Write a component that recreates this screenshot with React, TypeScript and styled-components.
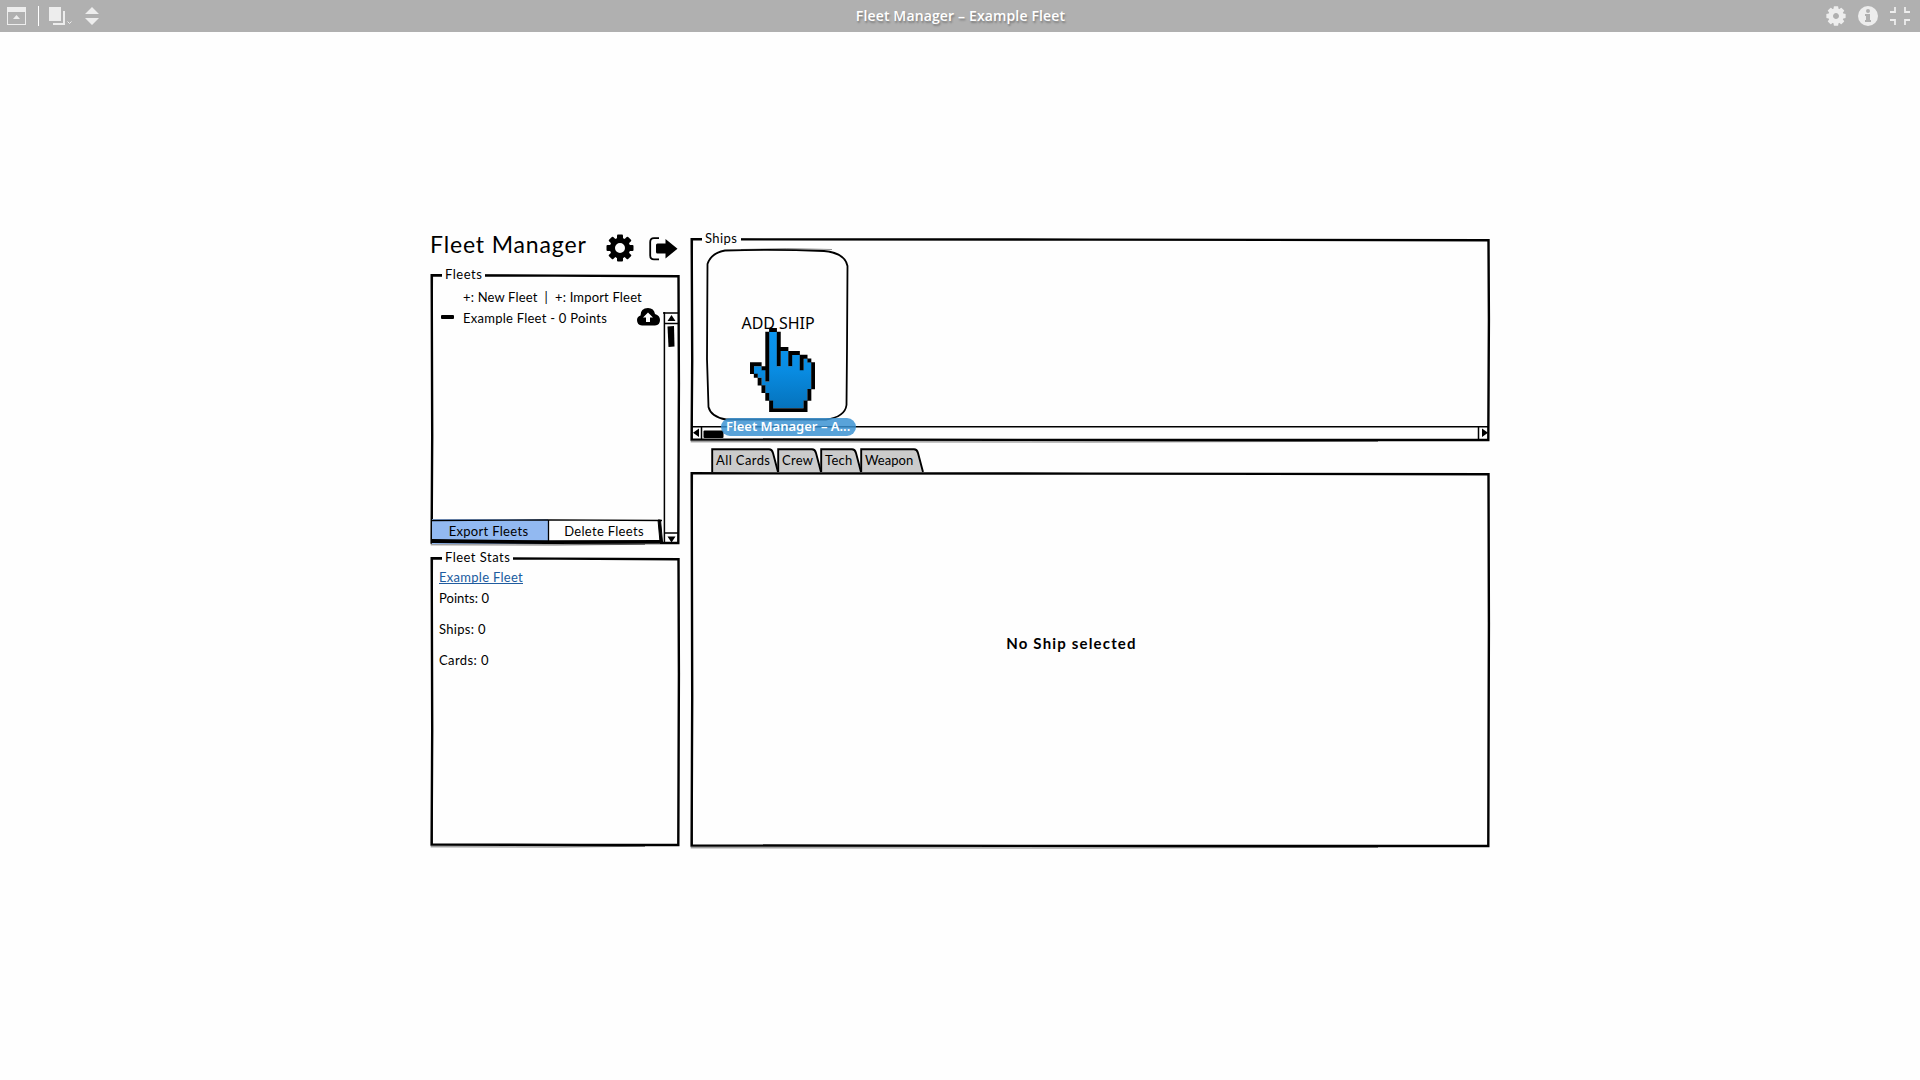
import React from "react";
import styled, { createGlobalStyle } from "styled-components";

const GlobalStyle = createGlobalStyle`
  * { box-sizing: border-box; }
  body { margin: 0; background: #fefefe; color: #000; font-family: Lato, "Open Sans", sans-serif; }
  svg { display: block; flex: none; }
`;

const Page = styled.div`
  min-height: 1080px;
  display: flex;
  flex-direction: column;
`;

const Toolbar = styled.header`
  height: 32px;
  display: grid;
  grid-template-columns: 1fr auto 1fr;
  align-items: center;
  padding: 0 10px 0 7px;
  background: #b0b0b0;
`;

const ToolGroup = styled.div<{ $end?: boolean }>`
  display: flex;
  align-items: center;
  justify-content: ${(p) => (p.$end ? "flex-end" : "flex-start")};
  gap: ${(p) => (p.$end ? "12px" : "0")};
`;

const Separator = styled.span`
  width: 1px;
  height: 20px;
  margin: 0 10px 0 12px;
  background: #fff;
`;

const DocumentTitle = styled.h1`
  margin: 0;
  padding-left: 4px;
  font: 600 14px/32px "Open Sans", sans-serif;
  letter-spacing: 0.14px;
  color: #fff;
  text-shadow: 1px 2px 2px rgba(0, 0, 0, 0.3);
`;

const Workspace = styled.main`
  display: flex;
  gap: 10px;
  margin: 198px 0 0 430px;
`;

const Sidebar = styled.div`
  width: 250px;
  display: flex;
  flex-direction: column;
`;

const Content = styled.div`
  width: 800px;
  padding-top: 8px;
  display: flex;
  flex-direction: column;
`;

const TitleRow = styled.div`
  height: 44px;
  display: flex;
  align-items: flex-start;
`;

const AppTitle = styled.h2`
  margin: 0;
  width: 176px;
  font-size: 23px;
  font-weight: 400;
  line-height: 29px;
  letter-spacing: 0.85px;
  white-space: nowrap;
`;

const IconSlot = styled.span<{ $left?: number; $top?: number }>`
  display: block;
  margin: ${(p) => p.$top || 0}px 0 0 ${(p) => p.$left || 0}px;
`;

const Panel = styled.section<{ $h: number; $gap?: number }>`
  position: relative;
  height: ${(p) => p.$h}px;
  margin-top: ${(p) => p.$gap || 0}px;
`;

const Outline = styled.svg`
  position: absolute;
  inset: 0;
  overflow: visible;
  pointer-events: none;
`;

const Legend = styled.h3<{ $w: number; $spacing: number }>`
  position: relative;
  width: ${(p) => p.$w}px;
  height: 16px;
  margin: -8px 0 0 12px;
  padding-left: 3px;
  background: #fefefe;
  font-size: 13px;
  font-weight: 400;
  line-height: 16px;
  letter-spacing: ${(p) => p.$spacing}px;
  white-space: nowrap;
`;

const Label = styled.span<{ $spacing?: number }>`
  font-size: 13px;
  line-height: 20px;
  letter-spacing: ${(p) => p.$spacing || 0}px;
  white-space: pre;
`;

const FleetsBody = styled.div`
  display: flex;
  flex-direction: column;
  height: 263px;
`;

const FleetActions = styled.div`
  padding: 5px 0 0 33px;
  height: 25px;
  display: flex;
`;

const FleetList = styled.div`
  display: flex;
  justify-content: space-between;
  height: 233px;
  margin-top: 5px;
`;

const FleetColumn = styled.div`
  width: 232px;
  display: flex;
  flex-direction: column;
  justify-content: space-between;
`;

const FleetRow = styled.div`
  display: flex;
  height: 20px;
  margin-top: -5px;
`;

const Dash = styled.span`
  width: 13px;
  height: 4px;
  margin: 8px 9px 0 11px;
  border-radius: 1px;
  background: #000;
`;

const FleetName = styled.div`
  width: 174px;
`;

const ButtonRow = styled.div`
  position: relative;
  display: flex;
  height: 25px;
  margin: 0 0 1px 2px;
`;

const Button = styled.button<{ $active?: boolean; $w: number }>`
  width: ${(p) => p.$w}px;
  height: 25px;
  padding: 0 ${(p) => (p.$active ? 3 : 0)}px 1px 0;
  border: 0;
  background: ${(p) => (p.$active ? "#92b9f1" : "#fefefe")};
  color: #000;
  font: 400 13px/20px Lato, sans-serif;
  letter-spacing: 0.31px;
`;

const StatsBody = styled.div`
  display: flex;
  flex-direction: column;
  align-items: flex-start;
  padding: 0 0 0 9px;
`;

const FleetLink = styled.a`
  height: 16px;
  margin: 3px 0 -1px;
  border-bottom: 1px solid #205c9f;
  color: #205c9f;
  font-size: 13px;
  line-height: 18px;
  letter-spacing: 0.28px;
`;

const Stat = styled.div<{ $spacing: number }>`
  height: 31px;
  font-size: 13px;
  line-height: 31px;
  letter-spacing: ${(p) => p.$spacing}px;
`;

const ShipsBody = styled.div`
  height: 180px;
  padding: 3px 0 0 16px;
`;

const ShipCard = styled.div`
  position: relative;
  width: 142px;
  height: 172px;
  padding: 64px 0 0 2px;
  text-align: center;
`;

const AddShip = styled.div`
  font: 400 16px/20px "Noto Sans", sans-serif;
  letter-spacing: -0.05px;
`;

const HandCursor = styled.svg`
  position: absolute;
  left: 44px;
  top: 79px;
`;

const LinkHint = styled.div`
  position: absolute;
  left: 15px;
  top: 169px;
  width: 135px;
  height: 18px;
  border-radius: 9px;
  background: rgba(57, 145, 210, 0.84);
  color: #fff;
  font: 600 13px/17px "Noto Sans", sans-serif;
  text-align: left;
  white-space: nowrap;
  z-index: 2;
`;

const HScroll = styled.div`
  display: flex;
  justify-content: space-between;
  height: 14px;
  margin: 0 1px;
`;

const TabRow = styled.nav`
  display: flex;
  height: 24px;
  margin: 6px 0 0 21px;
`;

const Tab = styled.button<{ $w: number; $spacing: number }>`
  position: relative;
  width: ${(p) => p.$w}px;
  height: 24px;
  padding: 0 0 0 5px;
  border: 0;
  background: none;
  color: #000;
  font: 400 13px/24px Lato, sans-serif;
  letter-spacing: ${(p) => p.$spacing}px;
  text-align: left;
  white-space: nowrap;
`;

const TabText = styled.span`
  position: relative;
`;

const EmptyMessage = styled.div`
  padding: 161px 37px 0 0;
  font: 700 15px/20px Lato, sans-serif;
  letter-spacing: 1.17px;
  text-align: center;
`;

function Frame({ w, h }: { w: number; h: number }) {
  const r = w - 1.5;
  const b = h - 2;
  return (
    <Outline width={w} height={h} fill="none" stroke="#000">
      <path strokeWidth="2.4" d={`M1.7 1.3L${w * 0.5} 1.6L${r} 2.2L${r + 0.4} ${h * 0.4}L${r - 0.2} ${b}L${w * 0.6} ${b}L1.6 ${b - 0.5}L2.2 ${h * 0.6}Z`} />
      <path strokeWidth="0.9" d={`M0.7 ${h - 0.2}L${w * 0.5} ${h}L${w * 0.86} ${h - 0.7}`} opacity=".6" />
      <path strokeWidth="1" d={`M2.6 2L1.7 ${h * 0.5}L2.5 ${b}M${r} ${h * 0.5}L${r} ${b}`} opacity=".7" />
    </Outline>
  );
}

function Gear({ size, color, hole, body, tooth }: { size: number; color: string; hole: number; body: number; tooth: number }) {
  return (
    <svg width={size} height={size} viewBox="-14 -14 28 28" fill={color}>
      {[0, 45, 90, 135, 180, 225, 270, 315].map((a) => (
        <rect key={a} x={-tooth / 2} y="-13.5" width={tooth} height="6" rx="1" transform={`rotate(${a})`} />
      ))}
      <circle r={(body + hole) / 2} fill="none" stroke={color} strokeWidth={body - hole} />
    </svg>
  );
}

const HAND = [
  ".....XX..........",
  "....XooX.........",
  "....XooX.........",
  "....XooX.........",
  "....XooX.........",
  "....XooXXX.......",
  "....XooXooXXX....",
  "....XooXooXooXX..",
  "....XooXooXooXoX.",
  "XXX.XooXooXooXooX",
  "XooXXooooooooXooX".replace("X", "X"),
  "XoooXoooooooooooX",
  ".XooXoooooooooooX",
  "..XoXoooooooooooX",
  "..XoooooooooooooX",
  "...XooooooooooooX",
  "...XoooooooooooX.",
  "....XooooooooooX.",
  "....XooooooooooX.",
  ".....XooooooooX..",
  ".....XooooooooX..",
  ".....XXXXXXXXXX..",
];

function cells(mark: string) {
  let d = "";
  HAND.forEach((row, y) => {
    [...row].forEach((c, x) => {
      if (c === mark) d += `M${x} ${y}h1.04v1.04h-1.04z`;
    });
  });
  return d;
}

function Hand() {
  return (
    <HandCursor width="65" height="84" viewBox="0 0 17 22" preserveAspectRatio="none">
      <linearGradient id="hand-fill" gradientUnits="userSpaceOnUse" x1="0" y1="0" x2="0" y2="22">
        <stop offset="0" stopColor="#0a97f2" />
        <stop offset=".5" stopColor="#098ce2" />
        <stop offset="1" stopColor="#0570b8" />
      </linearGradient>
      <path d={cells("o")} fill="url(#hand-fill)" />
      <path d={cells("X")} />
    </HandCursor>
  );
}

function TabShape({ w }: { w: number }) {
  return (
    <Outline width={w} height="24">
      <path d={`M1.2 24V1.3H${w - 8}Q${w - 5} 1.3 ${w - 4} 5L${w + 1} 24`} fill="#cbcbcb" stroke="#000" strokeWidth="1.9" />
    </Outline>
  );
}

const TABS = [
  { name: "All Cards", w: 66, spacing: 0.4 },
  { name: "Crew", w: 43, spacing: 0.3 },
  { name: "Tech", w: 40, spacing: 0.3 },
  { name: "Weapon", w: 62, spacing: 0.05 },
];

const STATS = [
  { text: "Points: 0", spacing: 0.05 },
  { text: "Ships: 0", spacing: 0.3 },
  { text: "Cards: 0", spacing: 0.4 },
];

export default function App() {
  return (
    <Page>
      <GlobalStyle />
      <Toolbar>
        <ToolGroup>
          <svg width="19" height="18" fill="#ededed">
            <path fillRule="evenodd" d="M0 0H19V18H0ZM1 5V17H18V5Z" />
            <path d="M6 12L9.5 8L13 12Z" />
          </svg>
          <Separator />
          <svg width="24" height="18" fill="#ededed">
            <path d="M0 0H12V14H0ZM14 4H16V18H4V16H14Z" />
            <path d="M18.5 14.5L20.5 16.5L22.5 14.5" fill="none" stroke="#ededed" />
          </svg>
          <IconSlot $left={12}>
            <svg width="14" height="18" fill="#ededed"><path d="M0 7L7 0L14 7ZM0 11L7 18L14 11Z" /></svg>
          </IconSlot>
        </ToolGroup>
        <DocumentTitle>Fleet Manager – Example Fleet</DocumentTitle>
        <ToolGroup $end>
          <Gear size={20} color="#ededed" hole={4.2} body={11} tooth={6.5} />
          <svg width="20" height="20">
            <circle cx="10" cy="10" r="10" fill="#ededed" />
            <path d="M8 8H12V14H13V16H7V14H8V10H7V8Z" fill="#b0b0b0" />
            <circle cx="10" cy="5" r="2" fill="#b0b0b0" />
          </svg>
          <svg width="20" height="18" fill="none" stroke="#ededed" strokeWidth="1.8">
            <path d="M0 5H5V0M15 0V5H20M0 13H5V18M20 13H15V18" />
          </svg>
        </ToolGroup>
      </Toolbar>
      <Workspace>
        <Sidebar>
          <TitleRow>
            <AppTitle>Fleet Manager</AppTitle>
            <IconSlot $top={4}><Gear size={28} color="#000" hole={5} body={10.3} tooth={6} /></IconSlot>
            <IconSlot $left={15} $top={7}>
              <svg width="29" height="24">
                <path d="M10 1.2H5Q1.2 1.2 1.2 5V18.5Q1.2 22.3 5 22.3H10" fill="none" stroke="#000" strokeWidth="1.8" />
                <path d="M8.5 6.5H16.5V2L28.5 11.7L16.5 21.5V16.5H8.5Q7 16.5 7 15V8Q7 6.5 8.5 6.5Z" />
              </svg>
            </IconSlot>
          </TitleRow>
          <Panel $h={271}>
            <Frame w={250} h={271} />
            <Legend $w={43} $spacing={0.5}>Fleets</Legend>
            <FleetsBody>
              <FleetActions>
                <Label $spacing={0.17}>+: New Fleet  |  +: Import Fleet</Label>
              </FleetActions>
              <FleetList>
                <FleetColumn>
                  <FleetRow>
                    <Dash />
                    <FleetName><Label $spacing={0.25}>Example Fleet - 0 Points</Label></FleetName>
                    <IconSlot $top={1}>
                      <svg width="23" height="18">
                        <path d="M5 17.5Q0 17 0 12Q0 8.5 3.5 7.5Q3.5 0 11 0Q17 0 18 6Q23 7.5 23 12Q23 17 18 17.5Z" />
                        <path d="M11 4.5L16 9.5H13V14H9V9.5H6Z" fill="#fff" />
                      </svg>
                    </IconSlot>
                  </FleetRow>
                  <ButtonRow>
                    <Button $active $w={116}>Export Fleets</Button>
                    <Button $w={112}>Delete Fleets</Button>
                    <Outline width="230" height="25" fill="none" stroke="#000">
                      <path d="M0 1.5L116 .8L230 1.5M116.5 1V22" strokeWidth="1.3" />
                      <path d="M0 22L116 23.2L230 22.8" strokeWidth="3.8" />
                      <path d="M226 1L228.5 1L230.5 23H228Z" fill="#000" />
                    </Outline>
                  </ButtonRow>
                </FleetColumn>
                <svg width="17" height="233">
                  <path d="M1.4 0V232M0 1H15M1 11.5H15M1 221H15" stroke="#000" strokeWidth="1.5" fill="none" />
                  <path d="M4.5 9L8.5 3L12.5 9ZM4.5 224.5L8.5 230.5L12.5 224.5Z" />
                  <path d="M4.5 14.5L11 14L11.5 34.5L5.5 35Z" />
                </svg>
              </FleetList>
            </FleetsBody>
          </Panel>
          <Panel $h={290} $gap={12}>
            <Frame w={250} h={290} />
            <Legend $w={71} $spacing={0.47}>Fleet Stats</Legend>
            <StatsBody>
              <FleetLink>Example Fleet</FleetLink>
              {STATS.map((s) => (
                <Stat key={s.text} $spacing={s.spacing}>{s.text}</Stat>
              ))}
            </StatsBody>
          </Panel>
        </Sidebar>
        <Content>
          <Panel $h={204}>
            <Frame w={800} h={204} />
            <Legend $w={39} $spacing={0.4}>Ships</Legend>
            <ShipsBody>
              <ShipCard>
                <Outline width="142" height="172" fill="none" stroke="#000">
                  <path strokeWidth="1.8" d="M19 1.5Q70 .2 118 2Q139 4 141.5 17L141 100L140.5 156Q139 168 120 170.5L20 170.5Q5 168 2.5 158L1 110L1.5 15Q5 4 19 1.5Z" />
                  <path strokeWidth=".7" d="M35 .5Q80 -1.5 126 .5" opacity=".6" />
                </Outline>
                <AddShip>ADD SHIP</AddShip>
                <Hand />
                <LinkHint><IconSlot $left={5}>Fleet Manager – A...</IconSlot></LinkHint>
              </ShipCard>
            </ShipsBody>
            <HScroll>
              <svg width="798" height="14">
                <path d="M0 .8H798M10.5 0V13M787.5 0V13" fill="none" stroke="#000" strokeWidth="1.5" />
                <path d="M8 2.5V11L2 6.7ZM791 2.5V11L797 6.7Z" />
                <rect x="12.5" y="4.500" width="20" height="7.500" rx="1" />
              </svg>
            </HScroll>
          </Panel>
          <TabRow>
            {TABS.map((t) => (
              <Tab key={t.name} $w={t.w} $spacing={t.spacing}>
                <TabShape w={t.w} />
                <TabText>{t.name}</TabText>
              </Tab>
            ))}
          </TabRow>
          <Panel $h={376}>
            <Frame w={800} h={376} />
            <EmptyMessage>No Ship selected</EmptyMessage>
          </Panel>
        </Content>
      </Workspace>
    </Page>
  );
}
